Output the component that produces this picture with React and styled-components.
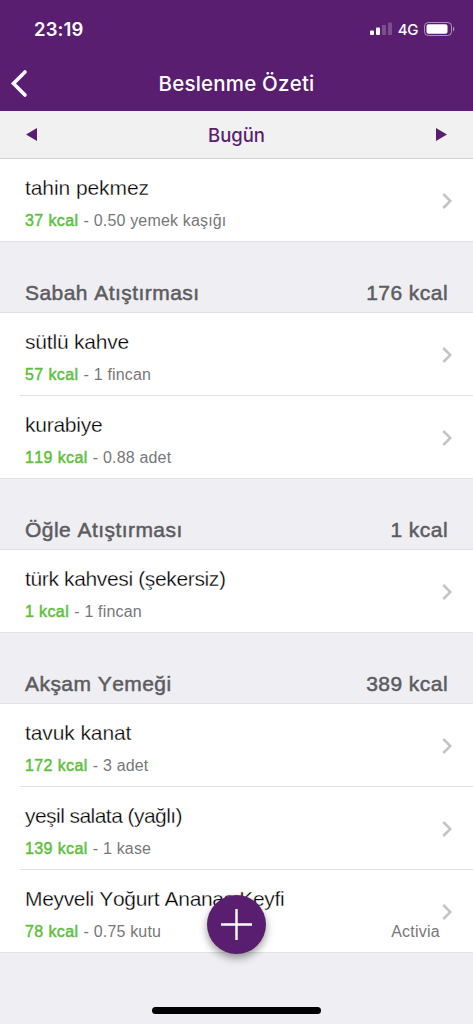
import styled, { createGlobalStyle } from "styled-components";

const GlobalStyle = createGlobalStyle`
    * { box-sizing : border-box; }
    body { margin : 0; background : #efeef3; }
`;

const Screen = styled.div`
    position : relative; width : 473px; height : 1024px; overflow : hidden;
    background : #efeef3; font-family : "Liberation Sans", Arial, sans-serif;
    font-kerning : none;
`;
const Header = styled.header`
    height : 111px; background : #5a1e70; color : white;
    font-family : Inter, sans-serif;
`;
const StatusBar = styled.div`
    height : 57px; padding : 1px 18px 0 34px;
    display : flex; align-items : center; justify-content : space-between;
`;
const Time = styled.span`
    font-size : 18.5px; font-weight : 600; letter-spacing : 0.1px;
`;
const StatusIcons = styled.div`
    display : flex; align-items : center;
`;
const Network = styled.span`
    font-size : 15px; font-weight : 500; margin : 0 6px 0 6px; letter-spacing : -0.4px;
`;
const TitleBar = styled.div`
    height : 54px; display : grid; align-items : center;
    grid-template-columns : 60px 1fr 60px;
`;
const BackButton = styled.button`
    border : 0; background : none; padding : 0 0 0 10px; height : 30px;
    text-align : left; cursor : pointer;
    svg { display : block; }
`;
const Title = styled.h1`
    margin : 0; font-size : 20.5px; font-weight : 500; text-align : center;
    white-space : nowrap; letter-spacing : 0.2px; line-height : 30px;
`;
const DateBar = styled.div`
    height : 48px; padding : 0 26px; background : #f1f1f1;
    border-bottom : 1px solid #cfcfd1; color : #5a1e70;
    display : flex; align-items : center; justify-content : space-between;
    font-family : Inter, sans-serif; font-size : 18.5px; font-weight : 500;
`;
const Arrow = styled.svg`
    width : 11px; height : 13px; display : block;
    transform : ${(props) => ( props.$right ? "scaleX(-1)" : "none" )};
`;
const SectionHead = styled.div`
    height : 71px; padding : 38px 25px 0; border-bottom : 1px solid #e0e0e4;
    display : flex; justify-content : space-between;
    font-size : 21px; line-height : 25px; color : #5c5c60;
    letter-spacing : 0.45px; -webkit-text-stroke : 0.5px #5c5c60;
`;
const Row = styled.div`
    position : relative; height : 83px; padding : 16px 20px 0 25px; background : white;
    display : flex; justify-content : space-between;
    &::after {
        content : ""; position : absolute; right : 0; bottom : 0; height : 1px;
        left : ${(props) => ( props.$last ? "0" : "20px" )};
        background : #e2e2e5;
    }
`;
const Name = styled.div`
    font-size : 21px; line-height : 25px; color : #000; white-space : nowrap;
    letter-spacing : ${(props) => props.$tracking || "-0.3px"};
    -webkit-text-stroke : 0.3px #fff;
`;
const Detail = styled.div`
    margin-top : 11px; font-size : 16px; line-height : 20px; color : #77777a;
    white-space : nowrap; letter-spacing : 0.17px;
`;
const Kcal = styled.span`
    margin-right : 0.6px;
    color : #5cc03c; letter-spacing : 0.38px; -webkit-text-stroke : 0.45px #5cc03c;
`;
const RowEnd = styled.div`
    display : flex; align-items : flex-start;
`;
const Brand = styled.span`
    margin-top : 36px; font-size : 16px; line-height : 20px; color : #77777a;
    letter-spacing : 0.25px;
`;
const Chevron = styled.svg`
    width : 12px; height : 18px; margin : 16.5px 0 0 1px; display : block;
`;
const AddButton = styled.button`
    position : absolute; left : 207px; top : 895px; width : 59px; height : 59px;
    padding : 0; border : 0; border-radius : 50%; background : #5a1e70; cursor : pointer;
    box-shadow : 0 4px 8px rgba(0, 0, 0, 0.4);
    display : flex; align-items : center; justify-content : center;
`;
const HomeIndicator = styled.div`
    position : absolute; left : 152px; top : 1007px; width : 169px; height : 7px;
    border-radius : 4px; background : black;
`;

const meals = [
    { items : [
        { name : "tahin pekmez", kcal : 37, amount : "0.50 yemek kaşığı", tracking : "-0.08px" },
    ] },
    { title : "Sabah Atıştırması", total : 176, items : [
        { name : "sütlü kahve", kcal : 57, amount : "1 fincan", tracking : "-0.2px" },
        { name : "kurabiye", kcal : 119, amount : "0.88 adet", tracking : "-0.25px" },
    ] },
    { title : "Öğle Atıştırması", total : 1, items : [
        { name : "türk kahvesi (şekersiz)", kcal : 1, amount : "1 fincan", tracking : "-0.36px" },
    ] },
    { title : "Akşam Yemeği", total : 389, items : [
        { name : "tavuk kanat", kcal : 172, amount : "3 adet", tracking : "-0.1px" },
        { name : "yeşil salata (yağlı)", kcal : 139, amount : "1 kase", tracking : "-0.55px" },
        { name : "Meyveli Yoğurt Ananas Keyfi", kcal : 78, amount : "0.75 kutu", brand : "Activia", tracking : "-0.34px" },
    ] },
];

const Signal = () => (
    <svg width="22" height="14" viewBox="0 0 22 14" fill="white">
        <rect x="0" y="8.5" width="4" height="4.5" rx="1" />
        <rect x="6" y="5.5" width="4" height="7.5" rx="1" />
        <rect x="12" y="3" width="4" height="10" rx="1" opacity="0.22" />
        <rect x="18" y="0.5" width="4" height="12.5" rx="1" opacity="0.22" />
    </svg>
);

const Battery = () => (
    <svg width="31" height="14" viewBox="0 0 31 14">
        <rect x="0.5" y="0.5" width="27" height="13" rx="3.8" fill="none" stroke="white" strokeOpacity="0.5" />
        <rect x="2.5" y="2.3" width="21" height="9.4" rx="2" fill="white" />
        <path d="M29 4.7c1.8.5 1.8 4.1 0 4.6z" fill="white" fillOpacity="0.5" />
    </svg>
);

const FoodRow = ({ item, last }) => (
    <Row $last={last}>
        <div>
            <Name $tracking={item.tracking}>{item.name}</Name>
            <Detail><Kcal>{item.kcal} kcal</Kcal> - {item.amount}</Detail>
        </div>
        <RowEnd>
            {item.brand && <Brand>{item.brand}</Brand>}
            <Chevron viewBox="0 0 12 18" fill="none">
                <path d="M2.3 2L9.3 9L2.3 16" stroke="#c4c4c7" strokeWidth="2.5" />
            </Chevron>
        </RowEnd>
    </Row>
);

const App = () => {
    return (<>
        <GlobalStyle />
        <Screen>
            <Header>
                <StatusBar>
                    <Time>23:19</Time>
                    <StatusIcons>
                        <Signal />
                        <Network>4G</Network>
                        <Battery />
                    </StatusIcons>
                </StatusBar>
                <TitleBar>
                    <BackButton>
                        <svg width="18" height="30" viewBox="0 0 18 30" fill="none">
                            <path d="M15 3L3.5 14.5L15 26" stroke="white" strokeWidth="3.6" strokeLinecap="round" />
                        </svg>
                    </BackButton>
                    <Title>Beslenme Özeti</Title>
                </TitleBar>
            </Header>
            <DateBar>
                <Arrow viewBox="0 0 11 13"><path d="M0 6.5L11 0V13z" fill="#5a1e70" /></Arrow>
                <span>Bugün</span>
                <Arrow $right viewBox="0 0 11 13"><path d="M0 6.5L11 0V13z" fill="#5a1e70" /></Arrow>
            </DateBar>
            {meals.map( (meal, i) => (
                <section key={i}>
                    {meal.title && (
                        <SectionHead>
                            <span>{meal.title}</span>
                            <span>{meal.total} kcal</span>
                        </SectionHead>
                    )}
                    {meal.items.map( (item, j) => (
                        <FoodRow key={item.name} item={item} last={j === meal.items.length - 1} />
                    ))}
                </section>
            ))}
            <AddButton>
                <svg width="31" height="31" viewBox="0 0 31 31">
                    <path d="M15.5 0V31M0 15.5H31" stroke="white" strokeWidth="2.4" />
                </svg>
            </AddButton>
            <HomeIndicator />
        </Screen>
    </>)
}
export default App;
